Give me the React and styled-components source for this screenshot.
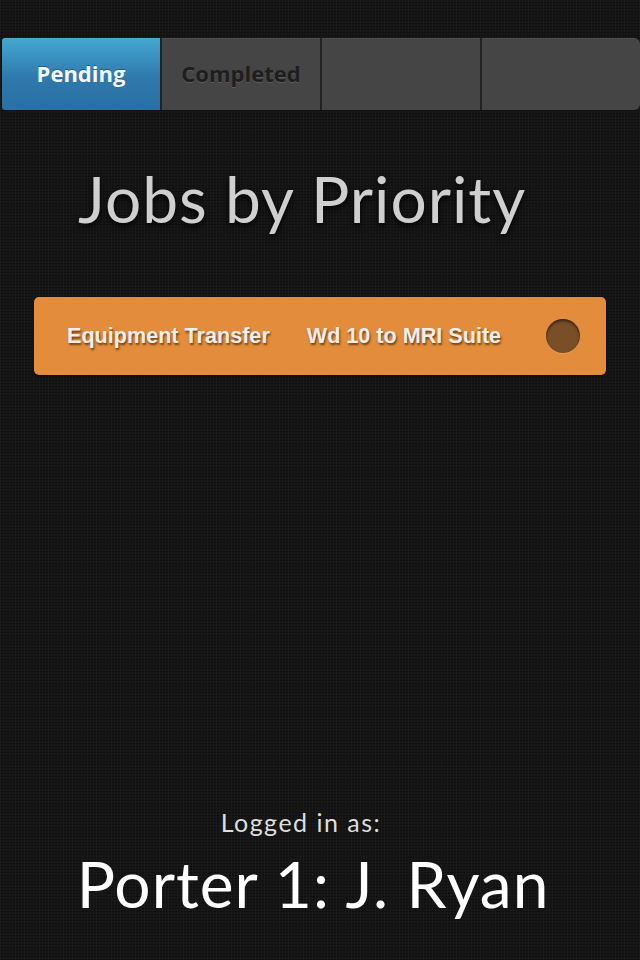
import React from 'react'
import styled, { createGlobalStyle } from 'styled-components'

const GlobalStyle = createGlobalStyle`
  html, body {
    margin: 0;
    padding: 0;
    background-color: #151515;
    background-image:
      repeating-linear-gradient(90deg, rgba(255,255,255,0.025) 0 1px, transparent 1px 3px),
      repeating-linear-gradient(0deg, rgba(0,0,0,0.25) 0 1px, transparent 1px 3px);
  }
`

const Page = styled.div`
  width: 640px;
  height: 960px;
  display: flex;
  flex-direction: column;
  box-sizing: border-box;
  padding-top: 38px;
`

const TabBar = styled.nav`
  display: grid;
  grid-template-columns: repeat(4, 1fr);
  gap: 2px;
  margin-left: 2px;
  height: 72px;
  background: #222;
  border-radius: 3px 6px 6px 3px;
  overflow: hidden;
`

const Tab = styled.div`
  display: flex;
  align-items: center;
  justify-content: center;
  padding-bottom: 3px;
  font-family: "Open Sans", "DejaVu Sans", sans-serif;
  font-weight: 700;
  font-size: 22px;
  color: ${p => (p.$active ? '#f4f8fb' : '#1e1e1e')};
  text-shadow: ${p => (p.$active ? '0 -1px 0 rgba(0,0,0,0.3)' : '0 1px 0 rgba(255,255,255,0.12)')};
  background: ${p => (p.$active
    ? 'linear-gradient(#44a8d0, #2e79ad 55%, #2a6fa3)'
    : '#454545')};
  box-shadow: inset 0 1px 0 rgba(255,255,255,0.06);
`

const Title = styled.h1`
  margin: 47px 0 0 0;
  padding-left: 78px;
  font-family: Lato, "Open Sans", sans-serif;
  font-weight: 400;
  font-size: 64px;
  line-height: 84px;
  letter-spacing: 1px;
  color: #cfcfcf;
  text-shadow: 0 3px 6px rgba(0,0,0,0.9);
`

const JobCard = styled.div`
  margin: 56px 34px 0 34px;
  height: 78px;
  border-radius: 5px;
  background: #e28c3c;
  box-shadow: 0 1px 2px rgba(0,0,0,0.6);
  display: flex;
  align-items: center;
  padding: 0 26px 0 33px;
  gap: 37px;
`

const JobText = styled.span`
  font-family: "Liberation Sans", Arial, sans-serif;
  font-weight: 700;
  font-size: 21.6px;
  color: #eeeeee;
  text-shadow: 1px 2px 2px rgba(80,40,0,0.75);
`

const StatusDot = styled.span`
  margin-left: auto;
  width: 34px;
  height: 34px;
  border-radius: 50%;
  background: #7a4e27;
  box-shadow: inset 0 2px 3px rgba(0,0,0,0.55), 0 1px 0 rgba(255,255,255,0.15);
`

const Footer = styled.footer`
  margin-top: auto;
  padding-bottom: 38px;
  display: flex;
  flex-direction: column;
  align-items: center;
  font-family: Lato, "Open Sans", sans-serif;
`

const LoggedLabel = styled.div`
  font-size: 25px;
  line-height: 30px;
  letter-spacing: 1.5px;
  color: #dedede;
  margin-right: 38px;
  margin-bottom: 9px;
`

const UserName = styled.div`
  font-size: 64px;
  line-height: 76px;
  letter-spacing: 1px;
  color: #ffffff;
  margin-right: 14px;
`

const jobs = [
  { type: 'Equipment Transfer', route: 'Wd 10 to MRI Suite' }
]

export default function App() {
  return (
    <>
      <GlobalStyle />
      <Page>
        <TabBar>
          <Tab $active>Pending</Tab>
          <Tab>Completed</Tab>
          <Tab />
          <Tab />
        </TabBar>

        <Title>Jobs by Priority</Title>

        {jobs.map(job => (
          <JobCard key={job.type}>
            <JobText>{job.type}</JobText>
            <JobText>{job.route}</JobText>
            <StatusDot />
          </JobCard>
        ))}

        <Footer>
          <LoggedLabel>Logged in as:</LoggedLabel>
          <UserName>Porter 1: J. Ryan</UserName>
        </Footer>
      </Page>
    </>
  )
}
